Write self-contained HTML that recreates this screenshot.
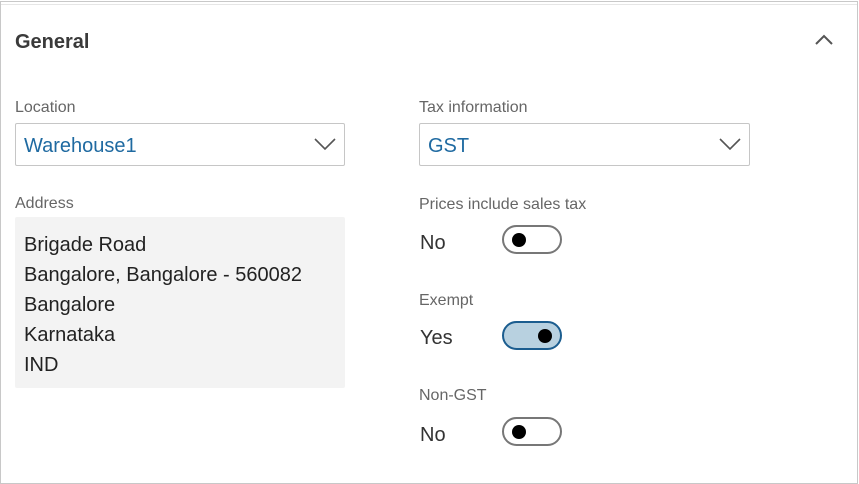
<!DOCTYPE html>
<html><head><style>
body{margin:0;width:859px;height:484px;background:#fff;font-family:"Liberation Sans",sans-serif;position:relative;overflow:hidden}
.frame{position:absolute;left:0;top:1px;width:856px;height:481px;border:1px solid #c8c8c8}
.topline{position:absolute;left:1px;top:4px;width:856px;height:1px;background:#e6e6e6}
.a{position:absolute;white-space:nowrap}
.lbl{font-size:16px;color:#666}
.dd{position:absolute;height:41px;border:1px solid #c6c6c6;border-radius:2px;box-sizing:border-box}
.dd span{position:absolute;left:8px;top:11px;font-size:20px;color:#1f6aa1}
.dd svg{position:absolute;right:8px;top:13px}
.addr{position:absolute;left:15px;top:217px;width:330px;height:171px;background:#f3f3f3;border-radius:2px}
.addr div{position:absolute;left:9px;font-size:20px;color:#222}
.tg{position:absolute;width:60px;height:29px;box-sizing:border-box;border:2px solid #777;border-radius:15px;left:502px}
.tg i{position:absolute;top:6px;left:8px;width:14px;height:14px;border-radius:50%;background:#000}
.tg.on{background:#b8d1e0;border-color:#1b5d8f}
.tg.on i{left:34px}
.val{font-size:20px;color:#333}
</style></head><body>
<div class="frame"></div>
<div class="topline"></div>
<div class="a" style="left:15px;top:31px;font-size:20px;font-weight:bold;color:#3a3a3a">General</div>
<svg class="a" style="left:813px;top:33px" width="22" height="14"><path d="M3 11 L11 3 L19 11" fill="none" stroke="#555" stroke-width="2"/></svg>
<div class="a lbl" style="left:15px;top:99px">Location</div>
<div class="dd" style="left:15px;top:123px;width:330px;height:43px"><span>Warehouse1</span><svg width="22" height="14"><path d="M1 2 L11 12 L21 2" fill="none" stroke="#555" stroke-width="1.6"/></svg></div>
<div class="a lbl" style="left:419px;top:99px">Tax information</div>
<div class="dd" style="left:419px;top:123px;width:331px;height:43px"><span>GST</span><svg width="22" height="14"><path d="M1 2 L11 12 L21 2" fill="none" stroke="#555" stroke-width="1.6"/></svg></div>
<div class="a lbl" style="left:15px;top:195px">Address</div>
<div class="addr">
<div style="top:17px">Brigade Road</div>
<div style="top:47px">Bangalore, Bangalore - 560082</div>
<div style="top:77px">Bangalore</div>
<div style="top:107px">Karnataka</div>
<div style="top:137px">IND</div>
</div>
<div class="a lbl" style="left:419px;top:196px">Prices include sales tax</div>
<div class="a val" style="left:420px;top:232px">No</div>
<div class="tg" style="top:225px"><i></i></div>
<div class="a lbl" style="left:419px;top:292px">Exempt</div>
<div class="a val" style="left:420px;top:327px">Yes</div>
<div class="tg on" style="top:321px"><i></i></div>
<div class="a lbl" style="left:419px;top:387px">Non-GST</div>
<div class="a val" style="left:420px;top:424px">No</div>
<div class="tg" style="top:417px"><i></i></div>
</body></html>
